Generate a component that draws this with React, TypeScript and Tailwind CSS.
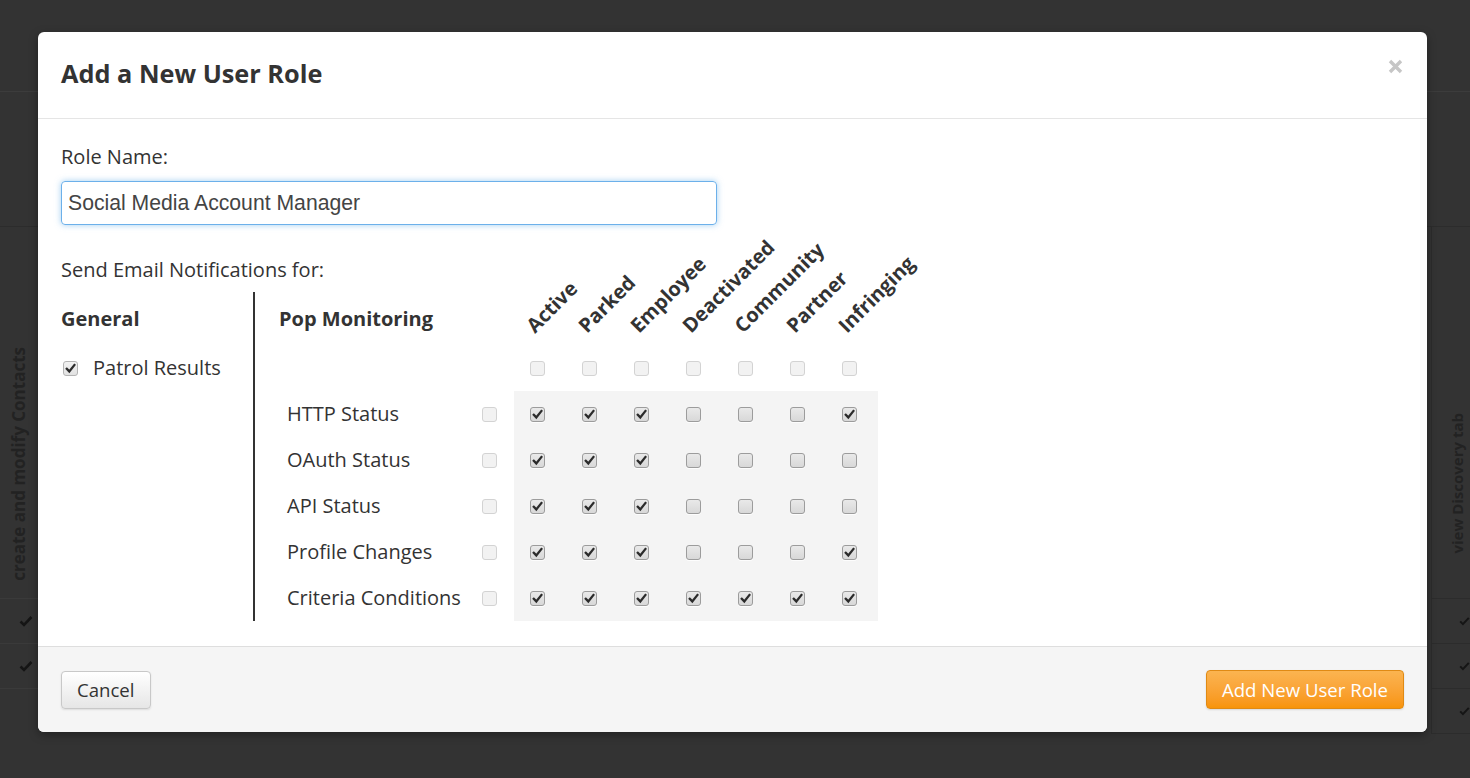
import React from 'react';

const COLUMNS = ['Active', 'Parked', 'Employee', 'Deactivated', 'Community', 'Partner', 'Infringing'];

const ROWS: { label: string; values: number[] }[] = [
  { label: 'HTTP Status', values: [1, 1, 1, 0, 0, 0, 1] },
  { label: 'OAuth Status', values: [1, 1, 1, 0, 0, 0, 0] },
  { label: 'API Status', values: [1, 1, 1, 0, 0, 0, 0] },
  { label: 'Profile Changes', values: [1, 1, 1, 0, 0, 0, 1] },
  { label: 'Criteria Conditions', values: [1, 1, 1, 1, 1, 1, 1] },
];

function Tick() {
  return (
    <svg width="11" height="11" viewBox="0 0 11 11" className="block">
      <path d="M1.8 5.8 L4.3 8.4 L9.4 2" fill="none" stroke="#2b2b2b" strokeWidth="2.3" strokeLinecap="square" />
    </svg>
  );
}

function Box({ checked, variant }: { checked?: boolean; variant: 'faint' | 'grid' | 'soft' }) {
  const styles = {
    faint: 'border-[#d3d3d3] bg-[#f2f2f2]',
    grid: 'border-[#9c9c9c] bg-linear-to-b from-[#e9e9e9] to-[#d8d8d8] shadow-[0_1px_0_rgba(255,255,255,0.8)]',
    soft: 'border-[#b4b4b4] bg-linear-to-b from-[#f2f2f2] to-[#e2e2e2]',
  }[variant];
  return (
    <div className={`flex h-[15px] w-[15px] shrink-0 items-center justify-center rounded-[3px] border ${styles}`}>
      {checked && <Tick />}
    </div>
  );
}

function BgCheck() {
  return (
    <svg width="14" height="12" viewBox="0 0 14 12">
      <path d="M1.5 6.5 L5 10 L12.5 2" fill="none" stroke="#151515" strokeWidth="2.6" />
    </svg>
  );
}

function PageBehind() {
  return (
    <div className="flex h-full flex-col">
      <div className="h-[92px] shrink-0 border-b border-[#3c3c3c]" />
      <div className="h-[135px] shrink-0 border-b border-[#2c2c2c]" />
      <div className="flex justify-between">
        <div className="w-[38px]">
          <div className="flex h-[372px] items-end justify-center pb-[17px] border-b border-[#3a3a3a]">
            <span className="rotate-180 text-[17px] font-bold text-[#222] [writing-mode:vertical-rl]">
              create and modify Contacts
            </span>
          </div>
          {[0, 1].map(i => (
            <div key={i} className="flex h-[45px] items-center pl-[19px] border-b border-[#3a3a3a]">
              <BgCheck />
            </div>
          ))}
        </div>
        <div className="w-[39px] border-l border-[#2c2c2c]">
          <div className="flex h-[372px] items-end pl-[14px] pb-[44px] border-b border-[#2c2c2c]">
            <span className="rotate-180 text-[15px] font-bold text-[#222] [writing-mode:vertical-rl]">
              view Discovery tab
            </span>
          </div>
          {[0, 1, 2].map(i => (
            <div key={i} className="flex h-[45px] items-center pl-[27px] border-b border-[#2c2c2c]">
              <BgCheck />
            </div>
          ))}
        </div>
      </div>
    </div>
  );
}

export default function App() {
  return (
    <div className="relative h-[778px] w-[1470px] overflow-hidden bg-[#333333] font-['Open_Sans',sans-serif] text-[#333]">
      <PageBehind />

      <div className="absolute left-[38px] top-[32px] flex h-[700px] w-[1389px] flex-col overflow-hidden rounded-[6px] bg-white shadow-[0_3px_10px_rgba(0,0,0,0.35)]">
        {/* header */}
        <div className="flex h-[87px] shrink-0 justify-between border-b border-[#e5e5e5] pl-[23px] pr-[24px]">
          <h1 className="self-center pb-[2px] text-[25.3px] font-bold">Add a New User Role</h1>
          <button className="mt-[27px] h-[15px] w-[15px]">
            <svg width="15" height="15" viewBox="0 0 15 15">
              <path d="M2 2 L13 13 M13 2 L2 13" stroke="#c6c6c6" strokeWidth="3.4" />
            </svg>
          </button>
        </div>

        {/* body */}
        <div className="flex-1 px-[23px] pt-[26px]">
          <div className="text-[20px] leading-[24px]">Role Name:</div>
          <input
            readOnly
            value="Social Media Account Manager"
            className="mt-[12px] block h-[44px] w-[656px] rounded-[4px] border border-[#6cb0ea] px-[6px] font-['Liberation_Sans',Arial,sans-serif] text-[21.2px] text-[#444] shadow-[0_0_6px_rgba(102,175,233,0.6)] outline-none"
          />
          <div className="mt-[33px] text-[20px] leading-[24px]">Send Email Notifications for:</div>

          <div className="mt-[10px] flex">
            {/* general */}
            <div className="w-[192px]">
              <div className="flex h-[53px] items-center text-[20px] font-bold">General</div>
              <div className="flex h-[46px] items-center gap-[15px] pl-[2px]">
                <Box checked variant="soft" />
                <span className="text-[20px]">Patrol Results</span>
              </div>
            </div>

            {/* pop monitoring */}
            <div className="border-l-[2px] border-[#333] pl-[24px]">
              <div className="flex h-[53px]">
                <div className="flex w-[203px] items-center text-[20px] font-bold">Pop Monitoring</div>
                <div className="w-[32px]" />
                {COLUMNS.map(c => (
                  <div key={c} className="relative w-[52px]">
                    <span className="absolute bottom-[9px] left-[23px] origin-bottom-left -rotate-45 whitespace-nowrap text-[20px] font-bold leading-none">
                      {c}
                    </span>
                  </div>
                ))}
              </div>
              <div className="flex h-[46px] items-center">
                <div className="w-[235px]" />
                {COLUMNS.map(c => (
                  <div key={c} className="w-[52px] pl-[16px]">
                    <Box variant="faint" />
                  </div>
                ))}
              </div>
              {ROWS.map(r => (
                <div key={r.label} className="flex h-[46px]">
                  <div className="flex w-[203px] items-center pl-[8px] text-[20px]">{r.label}</div>
                  <div className="flex w-[32px] items-center">
                    <Box variant="faint" />
                  </div>
                  {r.values.map((v, i) => (
                    <div key={i} className="flex w-[52px] items-center bg-[#f4f4f4] pl-[16px]">
                      <Box checked={v === 1} variant="grid" />
                    </div>
                  ))}
                </div>
              ))}
            </div>
          </div>
        </div>

        {/* footer */}
        <div className="flex h-[86px] shrink-0 items-center justify-between border-t border-[#dedede] bg-[#f5f5f5] pl-[23px] pr-[23px]">
          <button className="h-[38px] rounded-[4px] border border-[#c8c8c8] bg-linear-to-b from-white to-[#e6e6e6] px-[15px] text-[18.6px] text-[#333] shadow-[0_1px_2px_rgba(0,0,0,0.1)]">
            Cancel
          </button>
          <button className="h-[39px] rounded-[4px] border border-[#e08a14] bg-linear-to-b from-[#fbb450] to-[#f89406] px-[15px] text-[18.6px] text-white shadow-[0_1px_2px_rgba(0,0,0,0.12)]">
            Add New User Role
          </button>
        </div>
      </div>
    </div>
  );
}
